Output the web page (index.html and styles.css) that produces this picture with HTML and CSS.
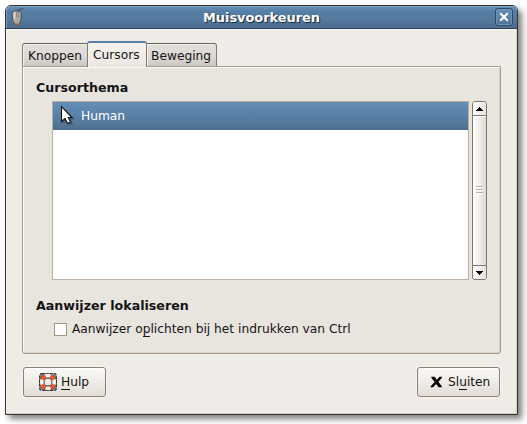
FILE: index.html
```html
<!DOCTYPE html>
<html lang="nl">
<head>
<meta charset="utf-8">
<title>Muisvoorkeuren</title>
<link rel="stylesheet" href="styles.css">
</head>
<body>
<main class="window">
  <header class="titlebar">
    <svg class="mouse-icon" width="14" height="19" viewBox="0 0 14 19">
      <path d="M6 4C5 1 8 3 9 1.500S11 2 13 .8" fill="none" stroke="#3f5870" stroke-width="1.3"/>
      <path d="M1 4.500Q5.500 1 10.500 4.500L10 11.500Q9 17 6 17.500Q3 17 1.500 12Z" fill="#aaa9a5" stroke="#484d50" stroke-width="1"/>
      <path d="M2 5Q3 3.500 4.500 3.500V10L3 12Z" fill="#d2d1cd"/>
      <path d="M5.500 4V9M7.500 4V9" stroke="#777" stroke-width=".7"/>
      <path d="M4.500 15.500Q6 17 7.500 15.500" fill="none" stroke="#d45b3c" stroke-width="1.400"/>
    </svg>
    <h1 class="title">Muisvoorkeuren</h1>
    <button class="close" aria-label="Sluiten">
      <svg width="10" height="10" viewBox="0 0 10 10"><path d="M2 2L8 8M8 2L2 8" stroke="#fff" stroke-width="2.200" stroke-linecap="square"/></svg>
    </button>
  </header>
  <div class="content">
    <nav class="tabs">
      <span class="tab tab-first">Knoppen</span>
      <span class="tab tab-active">Cursors</span>
      <span class="tab tab-last">Beweging</span>
    </nav>
    <section class="panel">
      <h2 class="heading">Cursorthema</h2>
      <div class="list-area">
        <div class="list">
          <div class="row">
            <svg class="pointer" width="16" height="22" viewBox="0 0 16 22">
              <path d="M3 3L3 19L7 16L9.500 20.500L13 19L11 14.500H15Z" fill="#26394c" opacity=".45"/>
              <path d="M1.500 1.500V16.500L5 13.500L7.500 18.500L10.500 17L8.300 12.500H12Z" fill="#fff" stroke="#111" stroke-width="1.100"/>
            </svg>
            <span class="row-label">Human</span>
          </div>
        </div>
        <div class="scrollbar">
          <div class="arrow arrow-up"><svg width="7" height="4" viewBox="0 0 7 4" shape-rendering="crispEdges"><path d="M3 0H4V1H5V2H6V3H7V4H0V3H1V2H2V1H3Z"/></svg></div>
          <div class="thumb"><i class="grip"></i><i class="grip"></i><i class="grip"></i></div>
          <div class="arrow arrow-down"><svg width="7" height="4" viewBox="0 0 7 4" shape-rendering="crispEdges"><path d="M0 0H7V1H6V2H5V3H4V4H3V3H2V2H1V1H0Z"/></svg></div>
        </div>
      </div>
      <h2 class="heading heading-locate">Aanwijzer lokaliseren</h2>
      <div class="option"><span class="checkbox"></span><span class="option-label">Aanwijzer o<span class="key">p</span>lichten bij het indrukken van Ctrl</span></div>
    </section>
    <footer class="actions">
      <button class="button help">
        <svg width="20" height="20" viewBox="0 0 20 20">
          <rect x="1.700" y="1.700" width="16.600" height="16.600" rx="2" fill="#9b9893" stroke="#333" stroke-width="1.300" stroke-dasharray="3 1"/>
          <circle cx="10" cy="10" r="6.200" fill="#efebe7" stroke="#2a2725" stroke-width="5.200"/>
          <circle cx="10" cy="10" r="6.300" fill="none" stroke="#f6f4f1" stroke-width="3.700"/>
          <circle class="buoy-bands" cx="10" cy="10" r="6.300" pathLength="80" stroke-dasharray="10 10" stroke-dashoffset="-5"/>
        </svg>
        <span class="button-label"><span class="key">H</span>ulp</span>
      </button>
      <button class="button dismiss">
        <svg width="13" height="12" viewBox="0 0 13 12"><path d="M1.300 .8H4.600L6.800 3.700L9.600 .8H12V1.700L8.400 5.700L11.800 10.200V11.300H8.600L6.200 8L3 11.300H.5V10.400L4.600 6.100L1.300 1.800Z" fill="#050505"/></svg>
        <span class="button-label">Sl<span class="key">u</span>iten</span>
      </button>
    </footer>
  </div>
</main>
</body>
</html>
```

FILE: styles.css
```css
* { box-sizing: border-box; }
body {
  margin: 0;
  height: 424px;
  overflow: hidden;
  padding: 5px;
  background: #fff;
  color: #151515;
  font: 12.22px/16px "DejaVu Sans", sans-serif;
}
.window {
  width: 513px;
  height: 410px;
  border: 1px solid #35332f;
  border-radius: 6px 6px 0 0;
  background: #efebe7;
  box-shadow: 4px 4px 6px rgba(0, 0, 0, .5);
}
.titlebar {
  display: flex;
  align-items: center;
  height: 23px;
  padding: 0 4px 0 5px;
  border-bottom: 1px solid #303e4f;
  border-radius: 5px 5px 0 0;
  background: linear-gradient(#6792b8, #557fa6 25%, #547ba0 55%, #4d6d8e);
  box-shadow: inset 0 1px #7ba0c2, inset 1px 0 #7096b8;
}
.mouse-icon { margin-top: 1px; flex: none; }
.title {
  flex: 1;
  margin: 0;
  padding: 1px 0 0 3px;
  text-align: center;
  font-size: 12.9px;
  line-height: 16px;
  color: #fff;
  text-shadow: 1px 1px 1px #17283a;
}
.close {
  display: flex;
  align-items: center;
  justify-content: center;
  width: 18px;
  height: 18px;
  padding: 0;
  border: 1px solid #2c4a68;
  border-radius: 3px;
  background: linear-gradient(#648eb5, #4f7397);
  box-shadow: inset 0 0 0 1px #6e95b8;
}
.content {
  height: 385px;
  padding: 12px 16px 0;
  border: solid #d6d0c8;
  border-width: 0 1px 1px 0;
  box-shadow: inset 1px 1px #faf8f6;
}
.tabs {
  display: flex;
  align-items: flex-end;
  height: 26px;
  position: relative;
}
.tab {
  height: 23px;
  margin-bottom: 1px;
  padding: 4px 0 0 5px;
  border: 1px solid #84786b;
  border-top-color: #65675c;
  border-bottom: 0;
  background: linear-gradient(#e3e0db, #dcd8d3 60%, #cbc7c0);
  box-shadow: inset 1px 1px #f4f2ef;
  white-space: nowrap;
}
.tab-first { width: 65px; border-radius: 3px 0 0 0; border-right: 0; }
.tab-active {
  width: 60px;
  height: 26px;
  margin-bottom: 0;
  padding-top: 4px;
  border-top: 2px solid #5580a8;
  border-radius: 3px 3px 0 0;
  background: linear-gradient(#f5f3f0, #eae6e0);
}
.tab-last { width: 70px; padding-left: 4px; border-left: 0; border-radius: 0 3px 0 0; }
.panel {
  height: 288px;
  width: 479px;
  margin-top: -1px;
  padding: 13px 13px 0;
  border: 1px solid #a99a8a;
  border-radius: 0 0 3px 3px;
  background: #e8e4de;
  box-shadow: inset 1px 1px #fbfaf8, inset -1px -1px #d8d2ca;
}
.heading { margin: 0; font-size: 12.65px; line-height: 16px; }
.list-area { display: flex; gap: 3px; margin: 5px 0 0 16px; }
.list { width: 417px; height: 179px; border: 1px solid #bbb0a3; background: #fff; }
.row {
  display: flex;
  height: 28px;
  padding: 3px 0 0 7px;
  color: #fff;
  background: linear-gradient(#658fb6, #577fa5 55%, #4e6f8f);
}
.pointer { flex: none; }
.row-label { margin: 3px 0 0 5px; }
.scrollbar {
  width: 15px;
  height: 179px;
  display: flex;
  flex-direction: column;
  border: 1px solid #84786b;
  border-radius: 3px;
  overflow: hidden;
  background: #f3f0ed;
}
.arrow {
  flex: none;
  height: 13px;
  display: flex;
  align-items: center;
  justify-content: center;
  background: linear-gradient(90deg, #fff, #e7e2dd);
}
.thumb {
  flex: 1;
  display: flex;
  flex-direction: column;
  align-items: center;
  justify-content: center;
  gap: 2px;
  padding-bottom: 2px;
  border: solid #84786b;
  border-width: 1px 0;
  background: linear-gradient(90deg, #fff, #f1eeea 50%, #dfd9d3);
  box-shadow: inset 0 1px #fff;
}
.grip { width: 7px; height: 1px; background: #b9ae9f; box-shadow: 0 1px #fff; }
.heading-locate { margin-top: 18px; }
.option { display: flex; margin: 7px 0 0 18px; }
.checkbox { width: 13px; height: 13px; margin-top: 2px; border: 1px solid #a49582; background: #fff; }
.option-label { margin-left: 5px; white-space: nowrap; }
.key { padding-bottom: 1px; box-shadow: 0 -1px #151515 inset; }
.actions { display: flex; justify-content: space-between; width: 477px; margin: 13px 0 0 1px; }
.button {
  display: flex;
  align-items: center;
  width: 83px;
  height: 30px;
  padding: 0 0 0 14px;
  border: 1px solid #8c7e70;
  border-radius: 3px;
  background: linear-gradient(#fbfaf9, #efebe7 50%, #e2ddd6);
  box-shadow: inset 0 1px #fff, 0 0 0 1px #f6f3f0;
  color: #151515;
  font: 12.22px/16px "DejaVu Sans", sans-serif;
}
.buoy-bands { fill: none; stroke: #ee5527; stroke-width: 3.7; }
.help .button-label { margin-left: 3px; }
.dismiss { padding-left: 12px; }
.dismiss .button-label { margin-left: 5px; }
```
